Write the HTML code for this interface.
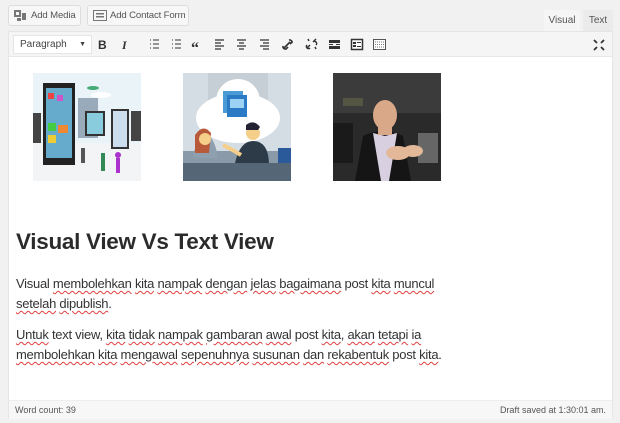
<!DOCTYPE html>
<html><head><meta charset="utf-8"><style>
*{margin:0;padding:0;box-sizing:border-box}
body{width:620px;height:423px;background:#f1f1f1;font-family:"Liberation Sans",sans-serif;position:relative;overflow:hidden;color:#555}
.btn{position:absolute;top:5px;height:21px;border:1px solid #ddd;background:#f7f7f7;border-radius:3px;font-size:9.6px;letter-spacing:-0.15px;color:#555;line-height:19px;padding-left:22px;white-space:nowrap;overflow:hidden}
.tab{position:absolute;top:10px;height:21px;font-size:10px;line-height:21px;text-align:center;color:#555}
.ed{position:absolute;left:8px;top:31px;width:605px;height:388px;border:1px solid #e5e5e5;background:#fff}
.tb{position:absolute;left:0;top:0;width:603px;height:25px;background:#f5f5f5;border-bottom:1px solid #e8e8e8}
.sel{position:absolute;left:4px;top:3px;width:79px;height:19px;background:#fff;border:1px solid #e5e5e5;font-size:10px;line-height:17px;padding-left:6px;color:#444}
.ic{position:absolute;top:6px}
.ft{position:absolute;left:0;top:368px;width:603px;height:19px;background:#f7f7f7;border-top:1px solid #eee;font-size:9px;color:#555;line-height:18px;padding:0 6px}
h1{position:absolute;left:7px;top:197px;font-size:22.5px;font-weight:bold;color:#2b2b2b;letter-spacing:-0.3px;white-space:nowrap}
p{position:absolute;left:7px;font-size:13px;letter-spacing:-0.27px;line-height:20px;color:#333;white-space:nowrap}
u{text-decoration:underline wavy #e04040;text-decoration-thickness:1px;text-underline-offset:2px}
</style></head><body>
<div class="btn" style="left:8px;width:73px"><svg style="position:absolute;left:5px;top:4px" width="14" height="12"><rect x="0" y="0" width="7" height="7" fill="#777"/><rect x="2" y="2" width="3" height="3" fill="#f7f7f7"/><rect x="8" y="3" width="4" height="7" fill="#777"/><rect x="3" y="8" width="4" height="3" fill="#777"/></svg>Add Media</div>
<div class="btn" style="left:87px;width:102px"><svg style="position:absolute;left:5px;top:4px" width="15" height="12"><rect x="0.5" y="0.5" width="13" height="10" fill="none" stroke="#777"/><rect x="3" y="3" width="8" height="1.5" fill="#777"/><rect x="3" y="6" width="8" height="1.5" fill="#777"/></svg>Add Contact Form</div>
<div class="tab" style="left:544px;width:36px;background:#f5f5f5">Visual</div>
<div class="tab" style="left:583px;width:30px;background:#ebebeb">Text</div>
<div class="ed">
<div class="tb">
<div class="sel">Paragraph<span style="position:absolute;right:5px;top:0;font-size:7px">▼</span></div>
<svg class="ic" style="left:0;top:0" width="603" height="25" fill="#333" stroke="#333">
<text x="89" y="17" font-size="12" font-weight="bold" stroke="none" font-family="Liberation Sans">B</text>
<text x="113" y="17" font-size="12" font-style="italic" font-weight="bold" stroke="none" font-family="Liberation Serif">I</text>
<g stroke-width="1"><path d="M141 8h1M141 12h1M141 16h1M144 8h6M144 12h6M144 16h6"/><path d="M163 8h1M163 12h1M163 16h1M166 8h6M166 12h6M166 16h6"/></g>
<text x="182" y="21" font-size="16" font-weight="bold" stroke="none" font-family="Liberation Serif">“</text>
<g stroke-width="1.2"><path d="M206 8h9M206 11h6M206 14h9M206 17h6"/><path d="M228 8h9M230 11h5M228 14h9M230 17h5"/><path d="M251 8h9M254 11h6M251 14h9M254 17h6"/></g>
<path d="M275 16l6-6M274 14a2.5 2.5 0 0 0 3 3l2-2M283 10l-2 2M280 8a2.5 2.5 0 0 1 3 3" fill="none" stroke-width="1.6"/>
<path d="M298 16l3-3M304 10l3-3M298 13a2 2 0 0 0 3 3M304 10a2 2 0 0 1 3 3M299 7l1 2M307 17l-1-2" fill="none" stroke-width="1.5"/>
<g stroke="none"><rect x="320" y="8" width="11" height="3"/><rect x="320" y="12" width="4" height="1"/><rect x="327" y="12" width="4" height="1"/><rect x="320" y="14" width="11" height="3"/></g>
<rect x="342.5" y="7.5" width="11" height="10" fill="#fff" stroke-width="1.5"/><rect x="344" y="10" width="3" height="2" stroke="none"/><rect x="348" y="10" width="4" height="1" stroke="none"/><rect x="344" y="13" width="3" height="2" stroke="none"/><rect x="348" y="14" width="4" height="1" stroke="none"/>
<rect x="364.5" y="7.5" width="12" height="10" fill="#fff" stroke="#555" stroke-width="1"/><path d="M366 10h9M366 12.5h9M366 15h9" stroke="#777" stroke-dasharray="1 1"/>
<path d="M585 8l3 3M595 8l-3 3M585 18l3-3M595 18l-3-3" stroke-width="1.8"/>
</svg>
</div>
<svg style="position:absolute;left:24px;top:41px" width="108" height="108"><rect width="108" height="108" fill="#eaf4f8"/><rect x="0" y="70" width="108" height="38" fill="#f2f4f6"/><rect x="45" y="25" width="20" height="40" fill="#9ab"/><rect x="10" y="10" width="32" height="82" fill="#222"/><rect x="13" y="15" width="26" height="70" fill="#6ac"/><rect x="15" y="20" width="6" height="6" fill="#e44"/><rect x="24" y="22" width="6" height="6" fill="#c5c"/><rect x="15" y="50" width="8" height="8" fill="#4c4"/><rect x="25" y="52" width="10" height="8" fill="#e83"/><rect x="15" y="62" width="8" height="8" fill="#ec3"/><rect x="52" y="38" width="20" height="25" fill="#333"/><rect x="54" y="40" width="16" height="21" fill="#8cd"/><rect x="78" y="36" width="18" height="40" fill="#333"/><rect x="80" y="38" width="14" height="36" fill="#cde"/><rect x="98" y="38" width="10" height="30" fill="#444"/><rect x="0" y="40" width="8" height="30" fill="#444"/><circle cx="85" cy="82" r="3" fill="#a3c"/><rect x="83" y="85" width="4" height="15" fill="#a3c"/><rect x="68" y="80" width="4" height="18" fill="#385"/><rect x="48" y="75" width="4" height="15" fill="#555"/><ellipse cx="68" cy="22" rx="10" ry="3" fill="#fff"/><ellipse cx="60" cy="15" rx="6" ry="2" fill="#4a7"/></svg>
<svg style="position:absolute;left:174px;top:41px" width="108" height="108"><rect width="108" height="108" fill="#d5dde4"/><rect x="25" y="0" width="60" height="55" fill="#c6cfd6"/><ellipse cx="55" cy="45" rx="42" ry="25" fill="#fff"/><ellipse cx="55" cy="28" rx="22" ry="22" fill="#fff"/><rect x="40" y="18" width="20" height="22" fill="#4a9ad6"/><rect x="44" y="22" width="20" height="22" fill="#2a7ac6"/><rect x="47" y="26" width="14" height="9" fill="#9cd3f5"/><rect x="0" y="78" width="108" height="30" fill="#8a9aa8"/><rect x="0" y="90" width="108" height="18" fill="#556677"/><path d="M10 85q5-30 15-25q8 10 10 25z" fill="#8ea0b0"/><path d="M12 62q8-12 16-2l-2 20h-14z" fill="#b85a3a"/><circle cx="22" cy="66" r="6" fill="#f5cf8a"/><circle cx="70" cy="60" r="7" fill="#f5cf8a"/><path d="M63 52q8-6 14 2l-2 3h-12z" fill="#223"/><path d="M52 90q5-22 18-22q15 0 16 22z" fill="#2d3a48"/><path d="M40 72q10 5 18 10" stroke="#f5cf8a" stroke-width="4"/><rect x="95" y="75" width="13" height="15" fill="#2a5a9a"/></svg>
<svg style="position:absolute;left:324px;top:41px" width="108" height="108"><rect width="108" height="108" fill="#2a2a2a"/><rect x="0" y="0" width="108" height="40" fill="#3b3b3b"/><rect x="10" y="25" width="20" height="8" fill="#554"/><rect x="85" y="60" width="20" height="30" fill="#666"/><rect x="0" y="50" width="20" height="40" fill="#1a1a1a"/><path d="M22 108l8-45q20-10 40 0l8 45z" fill="#151515"/><path d="M40 60l12 3 12-3-8 48h-8z" fill="#d8d0e0"/><ellipse cx="52" cy="42" rx="12" ry="15" fill="#d9a888"/><rect x="45" y="52" width="14" height="10" fill="#d9a888"/><ellipse cx="65" cy="80" rx="12" ry="7" fill="#e2b898"/><ellipse cx="80" cy="78" rx="10" ry="6" fill="#e2b898"/></svg>
<h1>Visual View Vs Text View</h1>
<p style="top:242px">Visual <u>membolehkan</u> <u>kita</u> <u>nampak</u> <u>dengan</u> <u>jelas</u> <u>bagaimana</u> post <u>kita</u> <u>muncul</u><br><u>setelah</u> <u>dipublish</u>.</p>
<p style="top:293px"><u>Untuk</u> text view, <u>kita</u> <u>tidak</u> <u>nampak</u> <u>gambaran</u> <u>awal</u> post <u>kita</u>, <u>akan</u> <u>tetapi</u> <u>ia</u><br><u>membolehkan</u> <u>kita</u> <u>mengawal</u> <u>sepenuhnya</u> <u>susunan</u> <u>dan</u> <u>rekabentuk</u> post <u>kita</u>.</p>
<div class="ft">Word count: 39<span style="float:right">Draft saved at 1:30:01 am.</span></div>
</div>
</body></html>
